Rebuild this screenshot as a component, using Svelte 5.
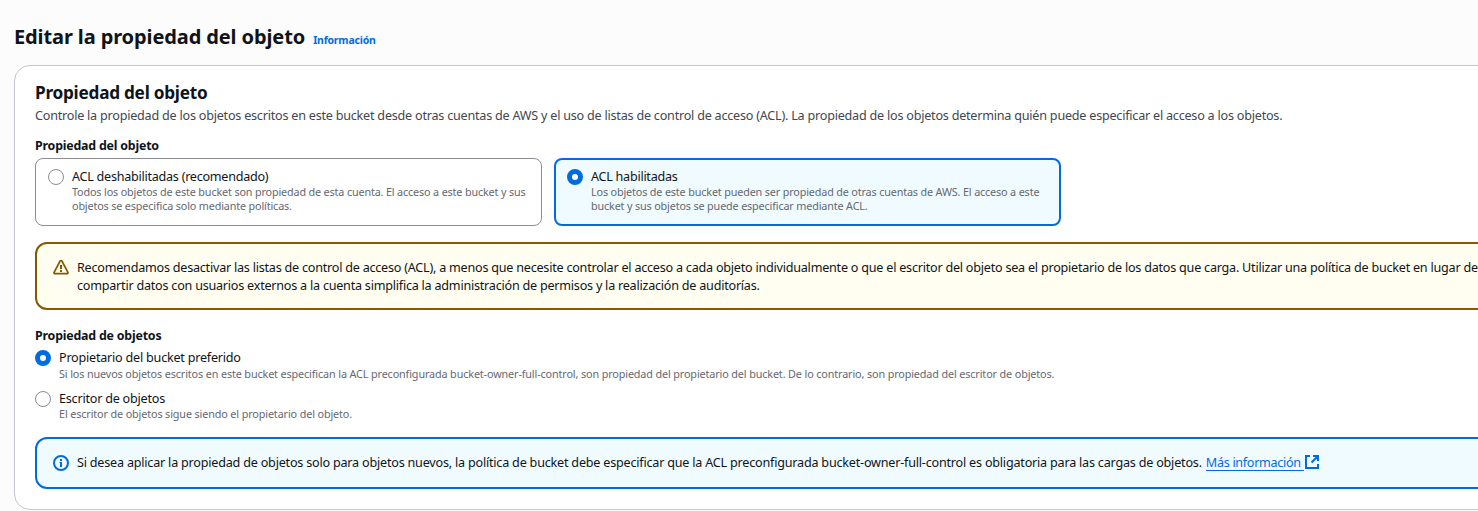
<script>
  let acl = $state('on');
  let owner = $state('preferred');

  const tiles = [
    {
      id: 'off',
      title: 'ACL deshabilitadas (recomendado)',
      lines: [
        'Todos los objetos de este bucket son propiedad de esta cuenta. El acceso a este bucket y sus',
        'objetos se especifica solo mediante políticas.'
      ]
    },
    {
      id: 'on',
      title: 'ACL habilitadas',
      lines: [
        'Los objetos de este bucket pueden ser propiedad de otras cuentas de AWS. El acceso a este',
        'bucket y sus objetos se puede especificar mediante ACL.'
      ]
    }
  ];

  const owners = [
    {
      id: 'preferred',
      title: 'Propietario del bucket preferido',
      text: 'Si los nuevos objetos escritos en este bucket especifican la ACL preconfigurada bucket-owner-full-control, son propiedad del propietario del bucket. De lo contrario, son propiedad del escritor de objetos.'
    },
    {
      id: 'writer',
      title: 'Escritor de objetos',
      text: 'El escritor de objetos sigue siendo el propietario del objeto.'
    }
  ];
</script>

<main>
  <header>
    <h1>Editar la propiedad del objeto</h1>
    <span class="info">Información</span>
  </header>

  <section class="card">
    <h2>Propiedad del objeto</h2>
    <p class="desc">Controle la propiedad de los objetos escritos en este bucket desde otras cuentas de AWS y el uso de listas de control de acceso (ACL). La propiedad de los objetos determina quién puede especificar el acceso a los objetos.</p>

    <div class="label first">Propiedad del objeto</div>
    <div class="tiles">
      {#each tiles as t}
        <div class="tile" class:selected={acl === t.id} role="radio" tabindex="-1" aria-checked={acl === t.id} onclick={() => (acl = t.id)} onkeydown={() => {}}>
          <span class="radio" class:checked={acl === t.id}></span>
          <div>
            <div class="name">{t.title}</div>
            {#each t.lines as l}<div class="small">{l}</div>{/each}
          </div>
        </div>
      {/each}
    </div>

    <div class="alert warning">
      <svg width="16" height="16" viewBox="0 0 16 16" fill="none" stroke="currentColor" stroke-width="2" stroke-linejoin="round">
        <path d="M8 1.500c.4 0 .7.200.9.500l6 11.300c.3.700-.1 1.400-.8 1.400H1.900c-.7 0-1.100-.7-.8-1.400L7.100 2c.2-.3.500-.5.900-.5Z" stroke-width="1.700" />
        <path d="M8 6v4M8 11v2" />
      </svg>
      <div class="body">
        <div>Recomendamos desactivar las listas de control de acceso (ACL), a menos que necesite controlar el acceso a cada objeto individualmente o que el escritor del objeto sea el propietario de los datos que carga. Utilizar una política de bucket en lugar de</div>
        <div>compartir datos con usuarios externos a la cuenta simplifica la administración de permisos y la realización de auditorías.</div>
      </div>
    </div>

    <div class="label second">Propiedad de objetos</div>
    <div class="owners">
      {#each owners as o}
        <div class="option" role="radio" tabindex="-1" aria-checked={owner === o.id} onclick={() => (owner = o.id)} onkeydown={() => {}}>
          <span class="radio" class:checked={owner === o.id}></span>
          <div>
            <div class="name">{o.title}</div>
            <div class="small">{o.text}</div>
          </div>
        </div>
      {/each}
    </div>

    <div class="alert notice">
      <svg width="16" height="16" viewBox="0 0 16 16" fill="none" stroke="currentColor" stroke-width="2">
        <circle cx="8" cy="8" r="7" />
        <path d="M8 4v2M8 7v5" />
        <path d="M6.500 7.500H8" stroke-width="1" />
      </svg>
      <div class="body line">
        <span>Si desea aplicar la propiedad de objetos solo para objetos nuevos, la política de bucket debe especificar que la ACL preconfigurada bucket-owner-full-control es obligatoria para las cargas de objetos.</span>
        <span class="link">Más información</span>
        <svg class="ext" width="14" height="14" viewBox="0 0 14 14" fill="none" stroke="currentColor" stroke-width="2">
          <path d="M5 1H1v12h12V9M8 1h5v5M13 1 6.500 7.500" />
        </svg>
      </div>
    </div>
  </section>
</main>

<style>
  :global(body) {
    background: #fcfcfd;
    overflow: hidden;
  }
  main {
    height: 511px;
    box-sizing: border-box;
    padding: 22px 0 0 14px;
    overflow: hidden;
    font-family: 'Noto Sans', sans-serif;
    font-size: 12.6px;
    line-height: 18px;
    letter-spacing: -0.223px;
    color: #0f141a;
    white-space: nowrap;
  }
  header {
    display: flex;
    align-items: baseline;
    gap: 8px;
    height: 43px;
  }
  h1, h2, p { margin: 0; }
  h1 {
    font-size: 20px;
    line-height: 30px;
    letter-spacing: -0.11px;
  }
  .info {
    font-size: 10.5px;
    font-weight: 700;
    letter-spacing: -0.2px;
    color: #006ce0;
  }
  .card {
    box-sizing: border-box;
    width: 1500px;
    height: 445px;
    padding: 16px 20px 0;
    border: 1px solid #c6c6cd;
    border-radius: 16px;
    background: #fff;
  }
  h2 {
    font-size: 17.2px;
    line-height: 22px;
    letter-spacing: -0.25px;
  }
  .desc {
    margin-top: 3px;
    color: #424650;
  }
  .label {
    font-size: 12.4px;
    font-weight: 700;
    letter-spacing: -0.2px;
  }
  .first { margin-top: 12px; }
  .second { margin-top: 17px; }
  .tiles {
    display: flex;
    gap: 12px;
    margin-top: 3px;
  }
  .tile {
    box-sizing: border-box;
    display: flex;
    gap: 8px;
    width: 507px;
    height: 68px;
    padding: 9px 12px 7px;
    border: 1px solid #8c8c94;
    border-radius: 8px;
  }
  .tile .name {
    margin-bottom: -1px;
    letter-spacing: -0.26px;
  }
  .tile .small { letter-spacing: -0.15px; }
  .tile.selected {
    padding: 8px 11px 6px;
    border: 2px solid #006ce0;
    background: #f0fbff;
  }
  .radio {
    box-sizing: border-box;
    flex: none;
    width: 16px;
    height: 16px;
    margin-top: 1px;
    border: 1px solid #8c8c94;
    border-radius: 50%;
    background: #fff;
  }
  .radio.checked { border: 5px solid #006ce0; }
  .small {
    font-size: 10.8px;
    line-height: 14px;
    letter-spacing: -0.124px;
    color: #656871;
  }
  .alert {
    box-sizing: border-box;
    display: flex;
    gap: 8px;
    padding: 15px 16px 13px;
    border: 2px solid;
    border-radius: 12px;
  }
  .alert svg { flex: none; }
  .body { color: #0f141a; }
  .warning {
    height: 68px;
    margin-top: 16px;
    border-color: #855900;
    background: #fffef0;
    color: #855900;
    letter-spacing: -0.23px;
  }
  .notice {
    height: 52px;
    margin-top: 16px;
    border-color: #006ce0;
    background: #f0fbff;
    color: #006ce0;
    letter-spacing: -0.209px;
  }
  .notice > svg { margin-top: 1px; }
  .owners {
    display: grid;
    gap: 9px;
    margin-top: 4px;
  }
  .option { display: flex; gap: 8px; }
  .option + .option .name { margin-bottom: -1px; }
  .line { display: flex; }
  .link {
    box-sizing: border-box;
    height: 17px;
    margin-left: 4px;
    padding-right: 3px;
    border-bottom: 1px solid #006ce0;
    letter-spacing: -0.3px;
    color: #006ce0;
  }
  .alert .ext {
    margin: 1px 0 0 1px;
    color: #006ce0;
  }
</style>
